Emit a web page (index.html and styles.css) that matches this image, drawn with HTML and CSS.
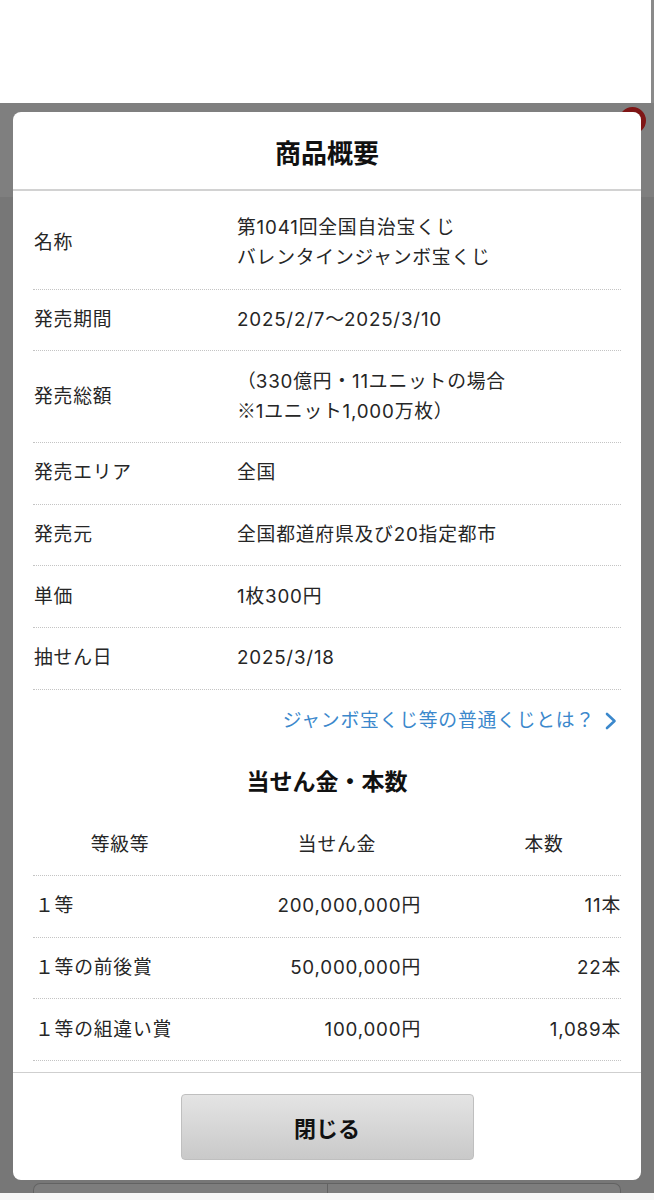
FILE: index.html
```html
<!DOCTYPE html>
<html lang="ja">
<head>
<meta charset="utf-8">
<title>商品概要</title>
<link rel="stylesheet" href="styles.css">
</head>
<body>
<div class="topbar"><div class="topbar-fill"></div><div class="scroll-strip"></div></div>
<div class="app">
  <div class="app-header"><span class="logo-ring"></span></div>
  <div class="app-main">
    <div class="bottom-box"><div class="bb-cell"></div><div class="bb-cell"></div></div>
  </div>
  <div class="overlay"></div>
  <div class="modal">
    <div class="modal-header"><h1 class="modal-title">商品概要</h1></div>
    <div class="modal-body">
      <dl class="info">
        <div class="info-row"><dt>名称</dt><dd>第1041回全国自治宝くじ<br>バレンタインジャンボ宝くじ</dd></div>
        <div class="info-row"><dt>発売期間</dt><dd>2025/2/7<span class="cjk">〜</span>2025/3/10</dd></div>
        <div class="info-row"><dt>発売総額</dt><dd><span class="cjk">（</span>330億円・11ユニットの場合<br><span class="cjk">※</span>1ユニット1,000万枚<span class="cjk">）</span></dd></div>
        <div class="info-row"><dt>発売エリア</dt><dd>全国</dd></div>
        <div class="info-row"><dt>発売元</dt><dd>全国都道府県及び20指定都市</dd></div>
        <div class="info-row"><dt>単価</dt><dd>1枚300円</dd></div>
        <div class="info-row"><dt>抽せん日</dt><dd>2025/3/18</dd></div>
      </dl>
      <a class="more-link" href="#"><span>ジャンボ宝くじ等の普通くじとは？</span><svg class="chev" width="13" height="18" viewBox="0 0 13 18"><path d="M3 2 L10.5 9 L3 16" fill="none" stroke="currentColor" stroke-width="2.6" stroke-linecap="round" stroke-linejoin="round"/></svg></a>
      <h2 class="section-title">当せん金・本数</h2>
      <div class="prize">
        <div class="prize-row prize-head"><span>等級等</span><span>当せん金</span><span>本数</span></div>
        <div class="prize-row"><span>１等</span><span>200,000,000円</span><span>11本</span></div>
        <div class="prize-row"><span>１等の前後賞</span><span>50,000,000円</span><span>22本</span></div>
        <div class="prize-row"><span>１等の組違い賞</span><span>100,000円</span><span>1,089本</span></div>
      </div>
    </div>
    <div class="modal-footer"><button class="close-btn" type="button">閉じる</button></div>
  </div>
</div>
<div class="bottombar"></div>
</body>
</html>
```

FILE: styles.css
```css
* { box-sizing: border-box; }
html, body { margin: 0; padding: 0; }
body {
  width: 654px;
  height: 1200px;
  overflow: hidden;
  font-family: Inter, "Noto Sans CJK JP", sans-serif;
  color: #222;
  background: #f7f7f7;
}
.topbar { height: 103px; display: flex; }
.topbar-fill { flex: 1; background: #fff; }
.scroll-strip { width: 3px; background: #8a8a8a; }
.app {
  position: relative;
  height: 1090px;
  background: #eeeeee;
  display: flex;
  flex-direction: column;
  overflow: hidden;
}
.app-header {
  height: 94px;
  background: #fff;
  display: flex;
  justify-content: flex-end;
  align-items: flex-start;
  padding: 4px 8px 0 0;
}
.logo-ring {
  width: 27px;
  height: 27px;
  border-radius: 50%;
  border: 5px solid #ff2a2a;
}
.app-main {
  flex: 1;
  display: flex;
  flex-direction: column;
  justify-content: flex-end;
  padding: 0 33px;
}
.bottom-box {
  height: 10px;
  display: grid;
  grid-template-columns: 1fr 1fr;
  border: 1px solid #c4c4c4;
  border-bottom: none;
  border-radius: 7px 7px 0 0;
  background: #fafafa;
}
.bb-cell + .bb-cell { border-left: 1px solid #c4c4c4; }
.overlay {
  position: absolute;
  inset: 0;
  background: rgba(0, 0, 0, 0.5);
}
.modal {
  position: absolute;
  left: 13px;
  top: 9px;
  width: 628px;
  height: 1068px;
  background: #fff;
  border-radius: 8px;
  display: flex;
  flex-direction: column;
  overflow: hidden;
}
.modal-header {
  height: 79px;
  flex: none;
  border-bottom: 2px solid #d2d2d2;
  display: flex;
  align-items: center;
  justify-content: center;
  padding-top: 2px;
}
.modal-title {
  margin: 0;
  font-size: 26px;
  font-weight: 700;
  color: #111;
}
.modal-body {
  flex: 1;
  overflow: hidden;
  padding: 7px 20px 0;
  font-size: 18.8px;
  letter-spacing: 0.8px;
  line-height: 30px;
  color: #262626;
}
.cjk {
  font-family: "Noto Sans CJK JP", sans-serif;
  letter-spacing: 0;
  line-height: 1;
}
.info { margin: 0; }
.info-row {
  display: grid;
  grid-template-columns: 204px 1fr;
  align-items: center;
  padding: 15.33px 0;
  border-bottom: 1px dotted #c4c4c4;
}
.info-row dt { margin: 0; padding-left: 1px; }
.info-row dd { margin: 0; }
.more-link {
  display: flex;
  justify-content: flex-end;
  align-items: center;
  gap: 9px;
  margin: 16px 4px 0 0;
  color: #3b88cc;
  text-decoration: none;
}
.chev { display: block; }
.section-title {
  margin: 29px 0 0;
  text-align: center;
  font-size: 23px;
  line-height: 34px;
  font-weight: 700;
  letter-spacing: 0;
  color: #111;
}
.prize { margin-top: 15.7px; }
.prize-row {
  display: grid;
  grid-template-columns: 174px 260px 1fr;
  padding: 15.33px 0;
  border-bottom: 1px dotted #c4c4c4;
}
.prize-row span:nth-child(1) { padding-left: 2px; }
.prize-row span:nth-child(2) { text-align: right; padding-right: 46px; }
.prize-row span:nth-child(3) { text-align: right; }
.prize-head span:nth-child(n) { text-align: center; padding: 0; }
.modal-footer {
  height: 108px;
  flex: none;
  border-top: 1px solid #cfcfcf;
  display: flex;
  justify-content: center;
  padding-top: 21px;
}
.close-btn {
  width: 293px;
  height: 66px;
  border: 1px solid #bfbfbf;
  border-radius: 4px;
  background: linear-gradient(#e4e4e4, #c9c9c9);
  font-family: "Noto Sans CJK JP", sans-serif;
  font-size: 22px;
  font-weight: 700;
  color: #111;
  padding: 0;
}
.bottombar { height: 7px; background: #f7f7f7; }
```
